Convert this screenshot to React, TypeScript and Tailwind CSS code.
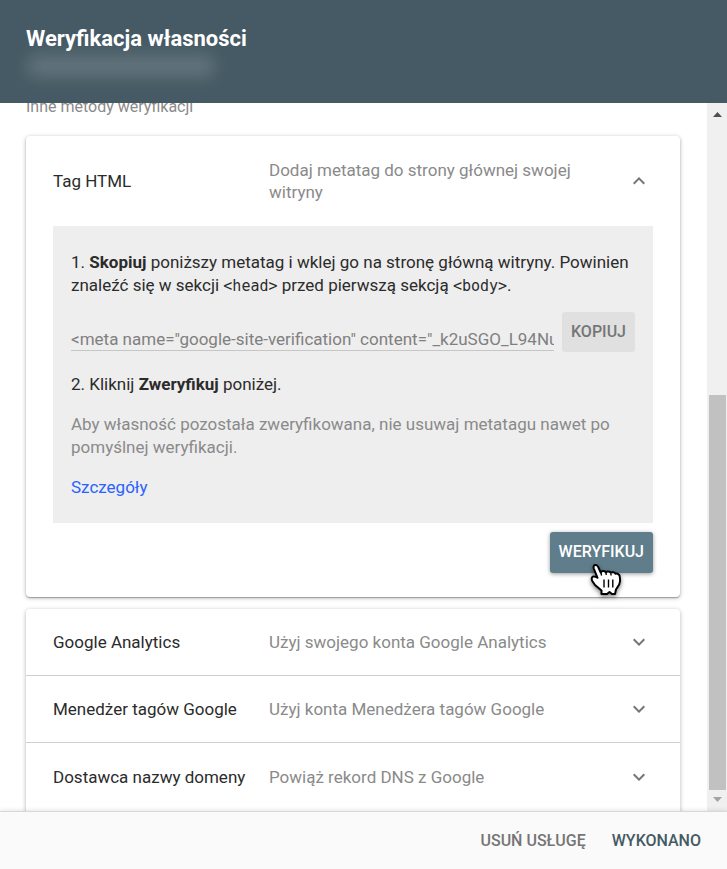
import { useState } from "react";

const VERIFICATION_TAG = '<meta name="google-site-verification" content="_k2uSGO_L94Nu';

const methods = [
  { name: "Google Analytics", description: "Użyj swojego konta Google Analytics" },
  { name: "Menedżer tagów Google", description: "Użyj konta Menedżera tagów Google" },
  { name: "Dostawca nazwy domeny", description: "Powiąż rekord DNS z Google" },
];

const Chevron = ({ up }: { up?: boolean }) => (
  <svg viewBox="0 0 24 24" className="w-6 h-6 shrink-0 fill-[#757575]" aria-hidden="true">
    {up ? (
      <path d="M12 8l-6 6 1.41 1.41L12 10.83l4.59 4.58L18 14z" />
    ) : (
      <path d="M16.59 8.59L12 13.17 7.41 8.59 6 10l6 6 6-6z" />
    )}
  </svg>
);

const MethodRow = ({ name, description, open, onClick }: {
  name: string;
  description: string;
  open?: boolean;
  onClick?: () => void;
}) => (
  <button
    type="button"
    onClick={onClick}
    aria-expanded={!!open}
    className={`flex w-full items-center px-[27px] text-left leading-[22px] ${open ? "min-h-[90px]" : "min-h-[67px]"}`}
  >
    <span className="w-[216px] shrink-0">{name}</span>
    <span className="flex-1 pr-10 text-[#8a8a8a]">{description}</span>
    <span className="pr-0.5">
      <Chevron up={open} />
    </span>
  </button>
);

const Pointer = () => (
  <svg
    viewBox="0 0 32 34"
    className="pointer-events-none absolute left-10 top-[31px] w-8 h-[34px] drop-shadow-[0_2px_2px_rgba(0,0,0,0.5)]"
    aria-hidden="true"
  >
    <path
      d="M11.500 31v-3.500L5 22l-2.700-4c-1-1.800-.8-4 .9-4.500 1.500-.4 3 .3 4.300 1.300L3.800 5.500C3.200 3.700 3.600 2.300 5 2c1.500-.3 2.600.5 3.200 2l2.500 5.500c.8-1.800 4.300-2 5-.2 1.200-1.400 4.300-1 5 .4 1.300-1 4.100-.4 4.800 1 1.800-.6 4 .8 4.300 2.800.6 3 .4 5.500-.6 8L26 26.500 25 31h-3l-2.500-2L17 31z"
      fill="#fff"
      stroke="#000"
      strokeWidth="2"
      strokeLinejoin="round"
    />
    <path
      d="M14 16.500v8M18.500 16.500v8M22.800 16.500v8M11 10l.6 2.500M16 10l.3 2M21 10.500v2"
      stroke="#000"
      strokeWidth="1.400"
      fill="none"
    />
  </svg>
);

const Scrollbar = () => (
  <div className="flex w-5 shrink-0 flex-col items-center bg-[#f0f0f0]" aria-hidden="true">
    <svg viewBox="0 0 9 5" className="mt-[9px] h-[5px] w-[9px] fill-[#505050]">
      <path d="M4.500 0L9 5H0z" />
    </svg>
    <div className="grow-[278]" />
    <div className="w-[17px] grow-[395] bg-[#c1c1c1]" />
    <svg viewBox="0 0 9 5" className="mt-[7px] mb-[9px] h-[5px] w-[9px] fill-[#a3a3a3]">
      <path d="M0 0h9L4.500 5z" />
    </svg>
  </div>
);

export default function App() {
  const [open, setOpen] = useState(true);

  return (
    <div className="flex h-screen flex-col overflow-hidden bg-white font-['Roboto',sans-serif] text-[17px] text-[#2b2b2b]">
      <header className="h-[103px] shrink-0 bg-[#455a64] px-[26px] pt-6">
        <h1 className="text-[22px] leading-[30px] font-bold text-white">Weryfikacja własności</h1>
        <div className="h-6 w-[190px] rounded-full bg-white/15 blur-[8px]" />
      </header>

      <div className="flex min-h-0 flex-1">
        <main className="min-w-0 flex-1 overflow-hidden pl-[26px] pr-[27px]">
          {/* The list is scrolled, so its heading is half under the header */}
          <h2 className="-mt-2 text-base leading-[23px] text-[#8a8a8a]">Inne metody weryfikacji</h2>

          <section className="mt-[18px] rounded-sm bg-white pb-6 shadow-[0_1px_4px_rgba(0,0,0,0.3),0_1px_1px_rgba(0,0,0,0.25)]">
            <MethodRow
              name="Tag HTML"
              description="Dodaj metatag do strony głównej swojej witryny"
              open={open}
              onClick={() => setOpen(!open)}
            />
            {open && (
              <div className="px-[27px]">
                <div className="bg-[#eee] px-[18px] pt-[25px] pb-6 leading-[23px]">
                  <p>
                    1. <b>Skopiuj</b> poniższy metatag i wklej go na stronę główną witryny. Powinien
                    znaleźć się w sekcji <code className="font-['DejaVu_Sans_Mono',monospace] text-[15px] leading-none">&lt;head&gt;</code> przed
                    pierwszą sekcją <code className="font-['DejaVu_Sans_Mono',monospace] text-[15px] leading-none">&lt;body&gt;</code>.
                  </p>
                  <div className="mt-[15px] flex items-end gap-2">
                    <input
                      readOnly
                      aria-label="Metatag"
                      value={VERIFICATION_TAG}
                      className="mb-px h-6 min-w-0 flex-1 border-b border-[#c6c6c6] bg-transparent text-[#808080] outline-none"
                    />
                    <button type="button" className="h-10 rounded-[3px] bg-[#e0e0e0] px-[9px] text-base font-medium text-[#757575]">
                      KOPIUJ
                    </button>
                  </div>
                  <p className="mt-[21px]">
                    2. Kliknij <b>Zweryfikuj</b> poniżej.
                  </p>
                  <p className="mt-[17px] text-[#8a8a8a]">
                    Aby własność pozostała zweryfikowana, nie usuwaj metatagu nawet po pomyślnej weryfikacji.
                  </p>
                  <p className="mt-[17px]">
                    <a href="#szczegoly" className="text-[#2962ff]">Szczegóły</a>
                  </p>
                </div>
                <div className="mt-[9px] flex justify-end">
                  <div className="relative">
                    <button type="button" className="h-[41px] rounded-[3px] bg-[#607d8b] px-[9px] pb-0.5 text-base font-medium text-white shadow-[0_1px_4px_rgba(0,0,0,0.4)]">
                      WERYFIKUJ
                    </button>
                    <Pointer />
                  </div>
                </div>
              </div>
            )}
          </section>

          <section className="mt-3 divide-y divide-[#cfcfcf] rounded-sm bg-white pb-3 shadow-[0_1px_4px_rgba(0,0,0,0.3)]">
            {methods.map((method) => (
              <MethodRow key={method.name} name={method.name} description={method.description} />
            ))}
          </section>
        </main>
        <Scrollbar />
      </div>

      <footer className="relative flex h-[58px] shrink-0 items-center justify-end gap-[26px] border-t border-[#d8d8d8] bg-[#fafafa] px-[26px] text-base font-medium shadow-[0_0_5px_rgba(0,0,0,0.15)]">
        <button type="button" className="text-[#757575]">USUŃ USŁUGĘ</button>
        <button type="button" className="text-[#455a64]">WYKONANO</button>
      </footer>
    </div>
  );
}
